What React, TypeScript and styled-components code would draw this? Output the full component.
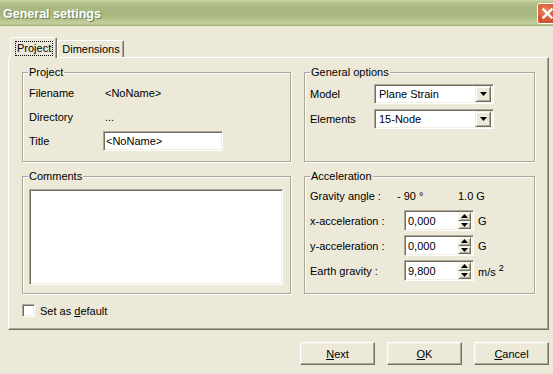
import styled, { createGlobalStyle } from 'styled-components';

const GlobalStyle = createGlobalStyle`
  html, body {
    margin: 0;
    padding: 0;
  }
  body {
    width: 553px;
    height: 374px;
    overflow: hidden;
    background: #ece9d8;
    font-family: 'Liberation Sans', Arial, sans-serif;
    font-size: 11px;
    color: #000;
  }
`;

const Window = styled.div`
  width: 561px;
  height: 374px;
  display: flex;
  flex-direction: column;
  background: #ece9d8;
`;

const TitleBar = styled.div`
  height: 26px;
  flex-shrink: 0;
  box-sizing: border-box;
  padding: 0 3px;
  display: flex;
  align-items: center;
  justify-content: space-between;
  background: linear-gradient(
    to bottom,
    #cbd6a6 0px,
    #b9c793 2px,
    #abba84 6px,
    #a6b67e 14px,
    #b2c08a 19px,
    #c6d29e 23px,
    #b0bf86 25px,
    #94a56c 26px
  );
`;

const Title = styled.span`
  font-family: 'Liberation Sans', Arial, sans-serif;
  font-weight: bold;
  font-size: 12.5px;
  color: #fff;
  text-shadow: 1px 1px 0 #6f7f4c;
  padding-top: 1px;
`;

const CloseButton = styled.div`
  width: 21px;
  height: 21px;
  box-sizing: border-box;
  border: 1px solid #fff;
  border-radius: 3px;
  background: radial-gradient(circle at 40% 35%, #e88a66 0%, #d65a33 55%, #c2441f 100%);
  display: flex;
  align-items: center;
  justify-content: center;
`;

const Body = styled.div`
  flex: 1;
  padding: 11px 12px 0 8px;
  display: flex;
  flex-direction: column;
`;

const TabStrip = styled.div`
  position: relative;
  z-index: 1;
  height: 20px;
  padding-left: 2px;
  display: flex;
  align-items: flex-end;
`;

const Tab = styled.div<{ $active?: boolean }>`
  box-sizing: border-box;
  height: ${p => (p.$active ? '21px' : '17px')};
  margin-bottom: ${p => (p.$active ? '-1px' : '0')};
  padding: ${p => (p.$active ? '3px 3px 0 4px' : '2px 3px 0 4px')};
  border: 1px solid;
  border-bottom: none;
  border-color: #fff #716f64 transparent #fff;
  box-shadow: inset -1px 0 0 #aca899;
  border-radius: 2px 2px 0 0;
  background: #ece9d8;
  line-height: 13px;
`;

const FocusText = styled.span`
  display: inline-block;
  padding: 0 1px;
  border: 1px dotted #000;
`;

const Panel = styled.div`
  box-sizing: border-box;
  height: 273px;
  padding: 14px 13px 0 13px;
  border: 1px solid;
  border-color: #fff #716f64 #716f64 #fff;
  box-shadow: inset -1px -1px 0 #aca899;
  display: flex;
  flex-direction: column;
`;

const GroupGrid = styled.div`
  display: grid;
  grid-template-columns: 269px 231px;
  grid-template-rows: 90px 118px;
  column-gap: 13px;
  row-gap: 14px;
`;

const GroupBox = styled.div<{ $padTop: number; $padLeft: number }>`
  position: relative;
  box-sizing: border-box;
  border: 1px solid #aca899;
  box-shadow: inset 1px 1px 0 #fff, 1px 1px 0 #fff;
  padding: ${p => p.$padTop}px 6px 0 ${p => p.$padLeft}px;
`;

const Caption = styled.span`
  position: absolute;
  top: -7px;
  left: 5px;
  padding: 0 1px;
  line-height: 13px;
  background: #ece9d8;
`;

const FormGrid = styled.div<{ $labelWidth: number; $rowHeight: number }>`
  display: grid;
  grid-template-columns: ${p => p.$labelWidth}px auto;
  grid-auto-rows: ${p => p.$rowHeight}px;
  align-items: center;
  justify-items: start;
`;

const Value = styled.span`
  padding-left: 2px;
`;

const sunken = `
  box-sizing: border-box;
  background: #fff;
  border: 1px solid;
  border-color: #aca899 #fff #fff #aca899;
  box-shadow: inset 1px 1px 0 #716f64, inset -1px -1px 0 #f1efe2;
`;

const TextField = styled.div<{ $width: number; $height: number }>`
  ${sunken}
  width: ${p => p.$width}px;
  height: ${p => p.$height}px;
  padding: 0 2px;
  display: flex;
  align-items: center;
`;

const Combo = styled.div`
  ${sunken}
  width: 120px;
  height: 20px;
  padding: 2px 2px 2px 4px;
  display: flex;
  align-items: center;
  justify-content: space-between;
`;

const raised = `
  box-sizing: border-box;
  background: #ece9d8;
  border: 1px solid;
  border-color: #f1efe2 #716f64 #716f64 #f1efe2;
  box-shadow: inset 1px 1px 0 #fff, inset -1px -1px 0 #aca899;
  display: flex;
  align-items: center;
  justify-content: center;
`;

const ArrowButton = styled.div`
  ${raised}
  width: 16px;
  height: 16px;
`;

const SpinField = styled.div`
  ${sunken}
  width: 70px;
  height: 21px;
  padding: 2px 2px 2px 3px;
  display: flex;
  align-items: center;
  justify-content: space-between;
`;

const SpinButtons = styled.div`
  display: flex;
  flex-direction: column;
  width: 13px;
  height: 17px;
`;

const SpinButton = styled.div`
  ${raised}
  flex: 1;
`;

const AccelRow = styled.div`
  display: flex;
  align-items: center;
  height: 25px;
`;

const RowLabel = styled.span<{ $width: number }>`
  width: ${p => p.$width}px;
  flex-shrink: 0;
`;

const Unit = styled.span`
  margin-left: 4px;
`;

const CommentBox = styled.div`
  ${sunken}
  width: 254px;
  height: 96px;
`;

const CheckRow = styled.label`
  margin-top: 10px;
  display: flex;
  align-items: center;
  gap: 5px;
  height: 13px;
`;

const CheckBox = styled.span`
  ${sunken}
  width: 13px;
  height: 13px;
`;

const ButtonRow = styled.div`
  margin-top: 12px;
  display: flex;
  justify-content: flex-end;
  gap: 12px;
`;

const Button = styled.div`
  box-sizing: border-box;
  width: 75px;
  height: 23px;
  background: #ece9d8;
  border: 1px solid;
  border-color: #fff #716f64 #716f64 #fff;
  box-shadow: inset -1px -1px 0 #aca899, inset 1px 1px 0 #f1efe2;
  display: flex;
  align-items: center;
  justify-content: center;
`;

const DownArrow = () => (
  <svg width="7" height="4" viewBox="0 0 7 4">
    <path d="M0 0h7L3.5 4z" fill="#000" />
  </svg>
);

const SmallArrow = ({ up }: { up?: boolean }) => (
  <svg width="7" height="4" viewBox="0 0 7 4">
    <path d={up ? 'M3.5 0L7 4H0z' : 'M0 0h7L3.5 4z'} fill="#000" />
  </svg>
);

const Spin = ({ value }: { value: string }) => (
  <SpinField>
    <span>{value}</span>
    <SpinButtons>
      <SpinButton>
        <SmallArrow up />
      </SpinButton>
      <SpinButton>
        <SmallArrow />
      </SpinButton>
    </SpinButtons>
  </SpinField>
);

const App = () => {
  return (
    <>
      <GlobalStyle />
      <Window>
        <TitleBar>
          <Title>General settings</Title>
          <CloseButton>
            <svg width="11" height="11" viewBox="0 0 11 11">
              <path d="M1.5 1.5l8 8M9.5 1.5l-8 8" stroke="#fff" strokeWidth="2.4" strokeLinecap="square" />
            </svg>
          </CloseButton>
        </TitleBar>
        <Body>
          <TabStrip>
            <Tab $active>
              <FocusText>Project</FocusText>
            </Tab>
            <Tab>Dimensions</Tab>
          </TabStrip>
          <Panel>
            <GroupGrid>
              <GroupBox $padTop={8} $padLeft={6}>
                <Caption>Project</Caption>
                <FormGrid $labelWidth={74} $rowHeight={24}>
                  <span>Filename</span>
                  <Value>&lt;NoName&gt;</Value>
                  <span>Directory</span>
                  <Value>...</Value>
                  <span>Title</span>
                  <TextField $width={120} $height={20}>&lt;NoName&gt;</TextField>
                </FormGrid>
              </GroupBox>
              <GroupBox $padTop={8} $padLeft={5}>
                <Caption>General options</Caption>
                <FormGrid $labelWidth={64} $rowHeight={25}>
                  <span>Model</span>
                  <Combo>
                    <span>Plane Strain</span>
                    <ArrowButton>
                      <DownArrow />
                    </ArrowButton>
                  </Combo>
                  <span>Elements</span>
                  <Combo>
                    <span>15-Node</span>
                    <ArrowButton>
                      <DownArrow />
                    </ArrowButton>
                  </Combo>
                </FormGrid>
              </GroupBox>
              <GroupBox $padTop={12} $padLeft={6}>
                <Caption>Comments</Caption>
                <CommentBox />
              </GroupBox>
              <GroupBox $padTop={6} $padLeft={5}>
                <Caption>Acceleration</Caption>
                <AccelRow>
                  <RowLabel $width={87}>Gravity angle :</RowLabel>
                  <RowLabel $width={61}>- 90 °</RowLabel>
                  <span>1.0 G</span>
                </AccelRow>
                <AccelRow>
                  <RowLabel $width={94}>x-acceleration :</RowLabel>
                  <Spin value="0,000" />
                  <Unit>G</Unit>
                </AccelRow>
                <AccelRow>
                  <RowLabel $width={94}>y-acceleration :</RowLabel>
                  <Spin value="0,000" />
                  <Unit>G</Unit>
                </AccelRow>
                <AccelRow>
                  <RowLabel $width={94}>Earth gravity :</RowLabel>
                  <Spin value="9,800" />
                  <Unit>
                    m/s <sup>2</sup>
                  </Unit>
                </AccelRow>
              </GroupBox>
            </GroupGrid>
            <CheckRow>
              <CheckBox />
              <span>
                Set as <u>d</u>efault
              </span>
            </CheckRow>
          </Panel>
          <ButtonRow>
            <Button>
              <span>
                <u>N</u>ext
              </span>
            </Button>
            <Button>
              <span>
                <u>O</u>K
              </span>
            </Button>
            <Button>
              <span>
                <u>C</u>ancel
              </span>
            </Button>
          </ButtonRow>
        </Body>
      </Window>
    </>
  );
};

export default App;
